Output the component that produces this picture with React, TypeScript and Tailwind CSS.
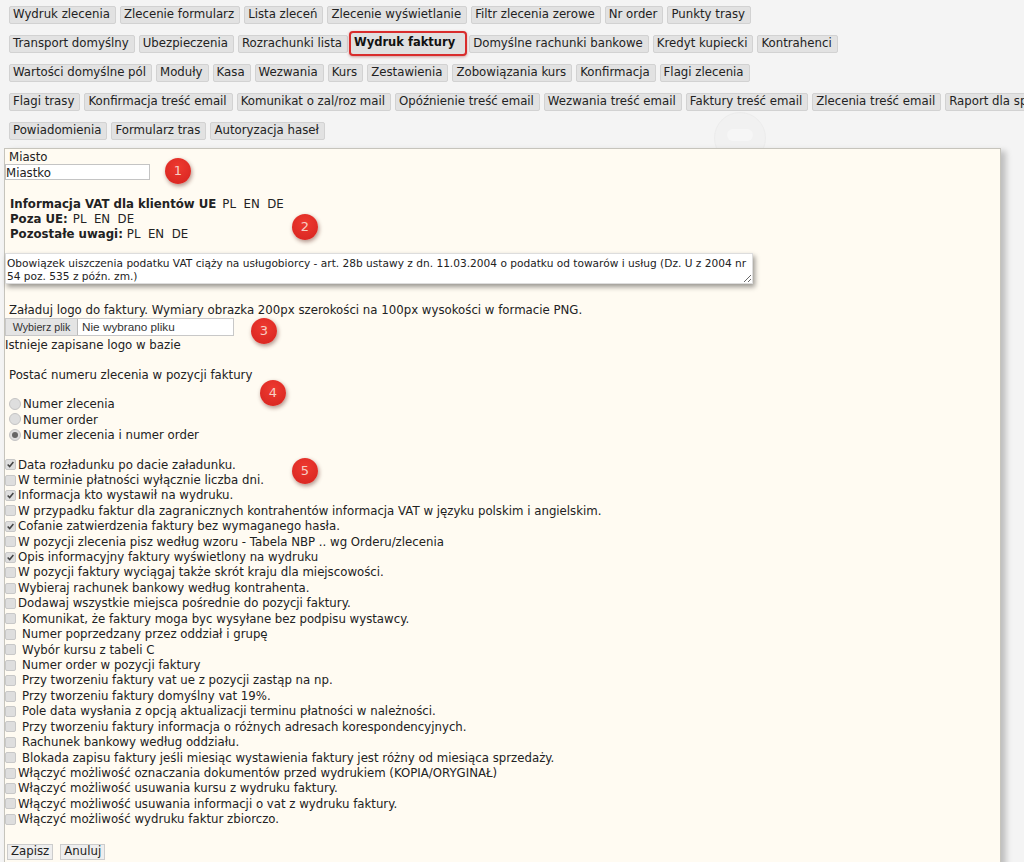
const navRows = [
  ['Wydruk zlecenia', 'Zlecenie formularz', 'Lista zleceń', 'Zlecenie wyświetlanie', 'Filtr zlecenia zerowe', 'Nr order', 'Punkty trasy'],
  ['Transport domyślny', 'Ubezpieczenia', 'Rozrachunki lista', 'Wydruk faktury', 'Domyślne rachunki bankowe', 'Kredyt kupiecki', 'Kontrahenci'],
  ['Wartości domyślne pól', 'Moduły', 'Kasa', 'Wezwania', 'Kurs', 'Zestawienia', 'Zobowiązania kurs', 'Konfirmacja', 'Flagi zlecenia'],
  ['Flagi trasy', 'Konfirmacja treść email', 'Komunikat o zal/roz mail', 'Opóźnienie treść email', 'Wezwania treść email', 'Faktury treść email', 'Zlecenia treść email', 'Raport dla spedycji'],
  ['Powiadomienia', 'Formularz tras', 'Autoryzacja haseł'],
]

const options = [
  { label: 'Data rozładunku po dacie załadunku.', checked: true },
  { label: 'W terminie płatności wyłącznie liczba dni.' },
  { label: 'Informacja kto wystawił na wydruku.', checked: true },
  { label: 'W przypadku faktur dla zagranicznych kontrahentów informacja VAT w języku polskim i angielskim.' },
  { label: 'Cofanie zatwierdzenia faktury bez wymaganego hasła.', checked: true },
  { label: 'W pozycji zlecenia pisz według wzoru - Tabela NBP .. wg Orderu/zlecenia' },
  { label: 'Opis informacyjny faktury wyświetlony na wydruku', checked: true },
  { label: 'W pozycji faktury wyciągaj także skrót kraju dla miejscowości.' },
  { label: 'Wybieraj rachunek bankowy według kontrahenta.' },
  { label: 'Dodawaj wszystkie miejsca pośrednie do pozycji faktury.' },
  { label: 'Komunikat, że faktury moga byc wysyłane bez podpisu wystawcy.', wide: true },
  { label: 'Numer poprzedzany przez oddział i grupę', wide: true },
  { label: 'Wybór kursu z tabeli C', wide: true },
  { label: 'Numer order w pozycji faktury', wide: true },
  { label: 'Przy tworzeniu faktury vat ue z pozycji zastąp na np.', wide: true },
  { label: 'Przy tworzeniu faktury domyślny vat 19%.', wide: true },
  { label: 'Pole data wysłania z opcją aktualizacji terminu płatności w należności.', wide: true },
  { label: 'Przy tworzeniu faktury informacja o różnych adresach korespondencyjnych.', wide: true },
  { label: 'Rachunek bankowy według oddziału.', wide: true },
  { label: 'Blokada zapisu faktury jeśli miesiąc wystawienia faktury jest różny od miesiąca sprzedaży.', wide: true },
  { label: 'Włączyć możliwość oznaczania dokumentów przed wydrukiem (KOPIA/ORYGINAŁ)' },
  { label: 'Włączyć możliwość usuwania kursu z wydruku faktury.' },
  { label: 'Włączyć możliwość usuwania informacji o vat z wydruku faktury.' },
  { label: 'Włączyć możliwość wydruku faktur zbiorczo.' },
]

function Badge({ n, className }: { n: number; className: string }) {
  return (
    <span className={`absolute flex h-[26px] w-[26px] items-center justify-center rounded-full bg-[radial-gradient(circle_at_50%_35%,#ee3a30,#d5231f)] text-[13px] text-[#f6cfc4] shadow-[1px_2px_4px_rgba(80,20,10,0.45)] ${className}`}>
      {n}
    </span>
  )
}

function Checkbox({ checked }: { checked?: boolean }) {
  return (
    <span className="-mt-px flex h-[11px] w-[11px] shrink-0 items-center justify-center rounded-[2px] border border-[#c8c8c8] bg-[#dedede]">
      {checked && (
        <svg width="11" height="11" viewBox="0 0 11 11" fill="none">
          <path d="M2 5.5 L4.5 8 L9 2.5" stroke="#444" strokeWidth="1.9" />
        </svg>
      )}
    </span>
  )
}

function Radio({ checked }: { checked?: boolean }) {
  return (
    <span className="-mt-[2px] flex h-[12px] w-[12px] shrink-0 items-center justify-center rounded-full border border-[#c4c4c4] bg-[#dedede]">
      {checked && <span className="h-[6px] w-[6px] rounded-full bg-[#666]" />}
    </span>
  )
}

export default function App() {
  return (
    <div className="relative h-[862px] w-[1024px] overflow-hidden bg-[#f4f4f4] font-['DejaVu_Sans',sans-serif] text-[11.76px] text-[#222]">
      <div className="absolute left-[714px] top-[112px] h-[52px] w-[52px] rounded-full border border-[#ececec] bg-[#f1f1f1]">
        <div className="ml-[12px] mt-[16px] h-[12px] w-[26px] rounded-full bg-[#f6f6f6]" />
      </div>

      <nav className="relative flex flex-col gap-[11px] pl-[9px] pt-[6px]">
        {navRows.map((row, i) => (
          <div key={i} className="flex h-[18px] items-center gap-[4px] whitespace-nowrap">
            {row.map((label) =>
              label === 'Wydruk faktury' ? (
                <button key={label} className="mb-[2px] ml-[-3px] mr-[-2px] h-[25px] shrink-0 rounded-[4px] border-2 border-[#d92c2c] bg-[#e0e0e0] pl-[3px] pr-[10px] text-[11.5px] font-bold text-[#111] shadow-[0_1px_3px_rgba(150,30,30,0.4)]">
                  {label}
                </button>
              ) : (
                <button key={label} className="h-[18px] shrink-0 rounded-[2px] border border-[#d2d2d2] bg-[#e2e2e2] pl-[3px] pr-[5px] leading-none text-[#222]">
                  {label}
                </button>
              ),
            )}
          </div>
        ))}
      </nav>

      <main className="absolute left-[4px] top-[148px] h-[720px] w-[997px] border border-[#c6c4bc] bg-[#fffbf2] shadow-[5px_3px_6px_rgba(0,0,0,0.22)]">
        <Badge n={1} className="left-[160px] top-[9px]" />
        <Badge n={2} className="left-[287px] top-[65px]" />
        <Badge n={3} className="left-[246px] top-[169px]" />
        <Badge n={4} className="left-[255px] top-[231px]" />
        <Badge n={5} className="left-[287px] top-[309px]" />

        <div className="pl-[4px] pt-[1px] leading-[14px]">Miasto</div>
        <input
          readOnly
          value="Miastko"
          className="block h-[16px] w-[145px] border border-[#c4c4c4] bg-white pt-[3px] font-['DejaVu_Sans',sans-serif] text-[11.76px] text-[#222]"
        />

        <div className="mt-[17px] pl-[5px] leading-[15px]">
          <div><b>Informacja VAT dla klientów UE</b><span className="ml-[6px]">PL&nbsp; EN&nbsp; DE</span></div>
          <div><b>Poza UE:</b><span className="ml-[5px]">PL&nbsp; EN&nbsp; DE</span></div>
          <div><b>Pozostałe uwagi:</b><span className="ml-[4px]">PL&nbsp; EN&nbsp; DE</span></div>
        </div>

        <textarea
          readOnly
          defaultValue="Obowiązek uiszczenia podatku VAT ciąży na usługobiorcy - art. 28b ustawy z dn. 11.03.2004 o podatku od towarów i usług (Dz. U z 2004 nr 54 poz. 535 z późn. zm.)"
          className="mt-[11px] block h-[31px] w-[748px] overflow-hidden border border-[#ddd] bg-white pl-[1px] pt-[3px] font-['DejaVu_Sans',sans-serif] text-[10.6px] leading-[13px] text-[#222] shadow-[2px_3px_5px_rgba(0,0,0,0.4)]"
        />

        <div className="mt-[19px] pl-[4px] leading-[15px]">Załaduj logo do faktury. Wymiary obrazka 200px szerokości na 100px wysokości w formacie PNG.</div>
        <div className="flex h-[18px] w-[229px] items-center border border-[#c8c8c8] bg-white">
          <button className="h-full w-[72px] border-r border-[#bbb] bg-[#e4e4e4] font-['Liberation_Sans',sans-serif] text-[10.7px] text-[#333]">Wybierz plik</button>
          <span className="pl-[4px] font-['Liberation_Sans',sans-serif] text-[11.76px] text-[#333]">Nie wybrano pliku</span>
        </div>
        <div className="mt-[2px] leading-[15px]">Istnieje zapisane logo w bazie</div>

        <div className="mt-[15px] pl-[4px] leading-[15px]">Postać numeru zlecenia w pozycji faktury</div>

        <div className="mt-[14px] pl-[4px] leading-[15.5px]">
          <div className="flex items-center gap-[2px]"><Radio /><span>Numer zlecenia</span></div>
          <div className="flex items-center gap-[2px]"><Radio /><span>Numer order</span></div>
          <div className="flex items-center gap-[2px]"><Radio checked /><span>Numer zlecenia i numer order</span></div>
        </div>

        <div className="mt-[14px] leading-[15.43px]">
          {options.map((o) => (
            <div key={o.label} className="flex h-[15.43px] items-center">
              <Checkbox checked={o.checked} />
              <span className={o.wide ? 'ml-[6px]' : 'ml-[2px]'}>{o.label}</span>
            </div>
          ))}
        </div>

        <div className="mt-[16px] flex gap-[7px] pl-[2px]">
          <button className="h-[16px] border border-[#ccc] bg-[#eee] px-[3px] leading-none">Zapisz</button>
          <button className="h-[16px] border border-[#ccc] bg-[#eee] px-[3px] leading-none">Anuluj</button>
        </div>
      </main>
    </div>
  )
}
